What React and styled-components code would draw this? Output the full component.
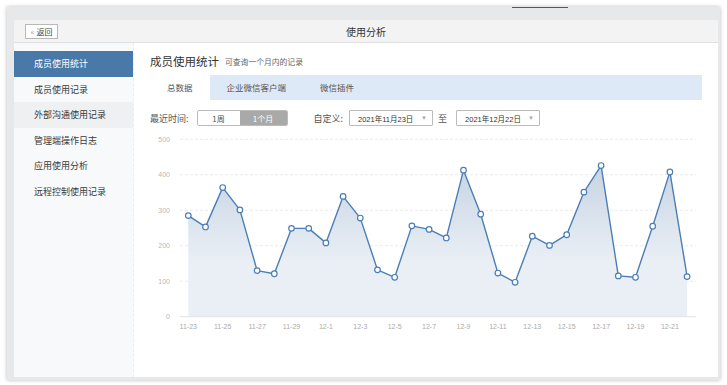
import React from 'react';
import styled, { createGlobalStyle } from 'styled-components';

const GlobalStyle = createGlobalStyle`
  html, body {
    margin: 0;
    padding: 0;
    background: #fff;
  }
  body {
    font-family: "Noto Sans CJK SC", "Noto Sans", sans-serif;
    color: #333;
  }
`;

const Page = styled.div`
  width: 727px;
  height: 385px;
  padding: 7px 7px 5px 7px;
  box-sizing: border-box;
`;

const Window = styled.div`
  position: relative;
  height: 373px;
  box-sizing: border-box;
  padding: 13px 2px 3px 7px;
  display: flex;
  flex-direction: column;
  background: #e7e8e9;
  box-shadow: 0 0 4px rgba(0, 0, 0, 0.28);

  /* active tab marker on the frame edge */
  &::before {
    content: '';
    position: absolute;
    left: 505px;
    top: 0;
    width: 56px;
    height: 1px;
    background: #3b6087;
  }
`;

const Inner = styled.div`
  flex: 1;
  display: flex;
  flex-direction: column;
  background: #fff;
  border-radius: 3px 3px 0 0;
  overflow: hidden;
`;

const Header = styled.div`
  height: 22px;
  border-bottom: 1px solid #dedfe0;
  background: #f3f3f3;
  display: grid;
  grid-template-columns: 1fr auto 1fr;
  align-items: center;
`;

const BackButton = styled.div`
  justify-self: start;
  margin-left: 11px;
  width: 33px;
  height: 15px;
  box-sizing: border-box;
  border: 1px solid #b8b8b8;
  background: #fff;
  display: flex;
  align-items: center;
  justify-content: center;
  gap: 2px;
  font-size: 8px;
  color: #444;

  span {
    color: #999;
  }
`;

const HeaderTitle = styled.div`
  font-size: 10px;
  color: #333;
`;

const Body = styled.div`
  flex: 1;
  display: flex;
`;

const Sidebar = styled.div`
  width: 120px;
  box-sizing: border-box;
  padding-top: 8px;
  background: #f8f9fb;
  border-right: 1px dashed #eceef1;
`;

const NavItem = styled.div`
  height: 25.5px;
  line-height: 25.5px;
  padding-left: 20px;
  font-size: 9px;
  color: ${(p) => (p.$active ? '#fff' : '#3a3a3a')};
  background: ${(p) => (p.$active ? '#4879a9' : p.$hover ? '#eef0f2' : 'transparent')};
`;

const Main = styled.div`
  flex: 1;
  padding: 8px 16px 0 16px;
`;

const TitleRow = styled.div`
  height: 20px;
  display: flex;
  align-items: center;
  gap: 6px;
`;

const Title = styled.div`
  font-size: 11.5px;
  color: #333;
`;

const Subtitle = styled.div`
  font-size: 7.8px;
  color: #666;
  padding-top: 1px;
`;

const Tabs = styled.div`
  margin-top: 4px;
  height: 25px;
  display: flex;
  background: #dde9f6;
`;

const Tab = styled.div`
  padding: 0 17px;
  line-height: 25px;
  font-size: 8.5px;
  color: #555;
  background: ${(p) => (p.$active ? '#fff' : 'transparent')};
`;

const FilterRow = styled.div`
  margin-top: 10px;
  height: 16px;
  display: flex;
  align-items: center;
`;

const Label = styled.div`
  font-size: 9px;
  color: #555;
  margin-right: ${(p) => p.$gap || 6}px;
  margin-left: ${(p) => p.$offset || 0}px;
`;

const Segmented = styled.div`
  display: flex;
  height: 16px;
  box-sizing: border-box;
  border: 1px solid #bbb;
  border-radius: 2px;
  overflow: hidden;
`;

const Segment = styled.div`
  width: ${(p) => p.$w}px;
  display: flex;
  align-items: center;
  justify-content: center;
  font-size: 8px;
  color: ${(p) => (p.$active ? '#fff' : '#555')};
  background: ${(p) => (p.$active ? '#a9a9a9' : '#fff')};
`;

const DateBox = styled.div`
  width: 84px;
  height: 16px;
  box-sizing: border-box;
  border: 1px solid #bbb;
  border-radius: 1px;
  display: flex;
  align-items: center;
  justify-content: space-between;
  padding: 0 5px 0 8px;
  font-family: "Liberation Sans", "Noto Sans CJK SC", sans-serif;
  font-size: 7.5px;
  color: #333;

  span {
    color: #aaa;
    font-size: 6px;
  }
`;

const To = styled.div`
  font-size: 9px;
  color: #555;
  margin: 0 9px 0 5px;
`;

const ChartSvg = styled.svg`
  display: block;
  margin-top: 6px;
`;

const values = [
  285, 253, 364, 301, 130, 121, 249, 249, 208, 339, 278, 132, 111, 256, 246,
  222, 413, 289, 123, 97, 227, 201, 231, 351, 426, 115, 111, 255, 408, 113,
];

const dates = [];
for (let d = 23; d <= 30; d++) dates.push(`11-${d}`);
for (let d = 1; d <= 22; d++) dates.push(`12-${d}`);

const baseY = 184.7;
const k = 0.3548;
const x0 = 38.3;
const step = 17.2;
const px = (i) => x0 + i * step;
const py = (v) => baseY - v * k;

function Chart() {
  const pts = values.map((v, i) => [px(i), py(v)]);
  const line = pts.map((p, i) => `${i ? 'L' : 'M'}${p[0].toFixed(1)},${p[1].toFixed(1)}`).join(' ');
  const area = `${line} L${px(values.length - 1).toFixed(1)},${baseY} L${x0},${baseY} Z`;

  return (
    <ChartSvg width="552" height="205" viewBox="0 0 552 205">
      <defs>
        <linearGradient id="fill" x1="0" y1="30" x2="0" y2="130" gradientUnits="userSpaceOnUse">
          <stop offset="0" stopColor="#c6d3e2" />
          <stop offset="1" stopColor="#eaeff5" />
        </linearGradient>
      </defs>
      {[100, 200, 300, 400, 500].map((v) => (
        <line
          key={v}
          x1="30"
          x2="546"
          y1={py(v)}
          y2={py(v)}
          stroke="#e4e4e4"
          strokeWidth="0.8"
          strokeDasharray="3 2"
        />
      ))}
      <path d={area} fill="url(#fill)" />
      <line x1="30" x2="546" y1={baseY} y2={baseY} stroke="#e2e2e2" strokeWidth="1" />
      {[0, 100, 200, 300, 400, 500].map((v) => (
        <text
          key={v}
          x="20"
          y={py(v) + 2.5}
          textAnchor="end"
          fontSize="7"
          fill="#b8b8b8"
          fontFamily="Liberation Sans, sans-serif"
        >
          {v}
        </text>
      ))}
      {dates.map((d, i) =>
        i % 2 === 0 ? (
          <text
            key={d}
            x={px(i)}
            y="196.5"
            textAnchor="middle"
            fontSize="7"
            fill="#aaa"
            fontFamily="Liberation Sans, sans-serif"
          >
            {d}
          </text>
        ) : null
      )}
      <path d={line} fill="none" stroke="#4a7eb6" strokeWidth="1.4" strokeLinejoin="round" />
      {pts.map((p, i) => (
        <circle key={i} cx={p[0]} cy={p[1]} r="2.8" fill="#fff" stroke="#4a7eb6" strokeWidth="1.2" />
      ))}
    </ChartSvg>
  );
}

const navItems = ['成员使用统计', '成员使用记录', '外部沟通使用记录', '管理端操作日志', '应用使用分析', '远程控制使用记录'];

export default function App() {
  return (
    <Page>
      <GlobalStyle />
      <Window>
        <Inner>
          <Header>
            <BackButton>
              <span>«</span>返回
            </BackButton>
            <HeaderTitle>使用分析</HeaderTitle>
            <div />
          </Header>
          <Body>
            <Sidebar>
              {navItems.map((n, i) => (
                <NavItem key={n} $active={i === 0} $hover={i === 2}>
                  {n}
                </NavItem>
              ))}
            </Sidebar>
            <Main>
              <TitleRow>
                <Title>成员使用统计</Title>
                <Subtitle>可查询一个月内的记录</Subtitle>
              </TitleRow>
              <Tabs>
                <Tab $active>总数据</Tab>
                <Tab>企业微信客户端</Tab>
                <Tab>微信插件</Tab>
              </Tabs>
              <FilterRow>
                <Label $gap={8}>最近时间:</Label>
                <Segmented>
                  <Segment $w={42}>1周</Segment>
                  <Segment $w={47} $active>
                    1个月
                  </Segment>
                </Segmented>
                <Label $offset={26}>自定义:</Label>
                <DateBox>
                  2021年11月23日<span>▼</span>
                </DateBox>
                <To>至</To>
                <DateBox>
                  2021年12月22日<span>▼</span>
                </DateBox>
              </FilterRow>
              <Chart />
            </Main>
          </Body>
        </Inner>
      </Window>
    </Page>
  );
}
